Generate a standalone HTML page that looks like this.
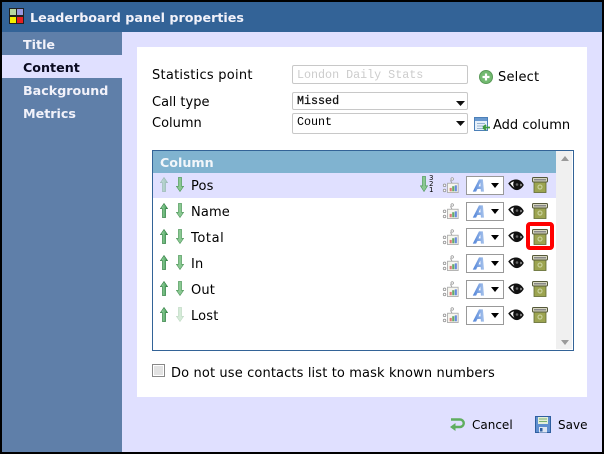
<!DOCTYPE html>
<html><head><meta charset="utf-8"><style>
html,body{margin:0;padding:0;background:#000}
#p{position:relative;width:604px;height:454px;background:#000;overflow:hidden;font-family:"DejaVu Sans","Liberation Sans",sans-serif;font-size:13px;color:#000}
#p div,#p svg,#p span.t{position:absolute}
.t{white-space:nowrap;line-height:16px}
.nav{left:23px;font-weight:bold;font-size:12.7px;color:#f2f2fa}
.box{left:292px;width:174px;background:#fff;border:1px solid #c8c8c8;border-radius:2px;font-family:"Liberation Mono",monospace;font-size:11.7px;color:#111}
.box span{position:absolute;left:4px;top:0;line-height:14px}
.r{left:191px;letter-spacing:.15px}
.sel{left:466px;width:36px;height:17px;border:1px solid #999;background:#fff}
</style></head><body><div id="p">
<svg width="0" height="0" style="left:0;top:0"><defs>
<linearGradient id="gu" x1="0" x2="1" y1="0" y2="0"><stop offset="0" stop-color="#a5dcae"/><stop offset="1" stop-color="#3f9a52"/></linearGradient>
<symbol id="up" viewBox="0 0 10 17" preserveAspectRatio="none"><path d="M5 .5L9.500 6.500H7v10H3v-10H.5z" fill="url(#gu)" stroke="#2f7a3f" stroke-width=".7"/></symbol>
<symbol id="dn" viewBox="0 0 10 17" preserveAspectRatio="none"><path d="M5 16.500L9.500 10.500H7V.5H3v10H.5z" fill="#8ac892" stroke="#4c9458" stroke-width=".7"/></symbol>
<symbol id="ch" viewBox="0 0 20 22"><path d="M12 3a1.500 1.500 0 1 0 .01 0M10 6l2 4" fill="#fff" stroke="#999"/><circle cx="3" cy="12" r="1.500" fill="#fff" stroke="#999"/><circle cx="3" cy="18" r="1.500" fill="#fff" stroke="#999"/><rect x="6.500" y="9.500" width="12.500" height="11" fill="#f6f6ee" stroke="#aaa"/><rect x="9" y="15" width="2.500" height="4" fill="#d77"/><rect x="12" y="13" width="2.500" height="6" fill="#6a6"/><rect x="15" y="12" width="2.500" height="7" fill="#68d"/></symbol>
<symbol id="eye" viewBox="0 0 16 12"><path d="M.2 4.500C3 1 6 .2 9 .5c3 .4 5.200 2.500 6.800 5.500-2 3.500-5 5.500-8 5C5 10.500 2.500 7.500.2 4.500z" fill="#111"/><path d="M2.200 4.500C3.500 3.200 4.800 2.600 6 2.500 4.800 4.500 5 6.800 6.500 8.800 4.800 7.800 3.500 6 2.200 4.500z" fill="#fff"/><path d="M12.500 4.500l1.500 1.500-1.500 1.500z" fill="#ddd"/><circle cx="9" cy="5.500" r="1.300" fill="#666"/></symbol>
<symbol id="tr" viewBox="0 0 16 16"><rect x="2" y="4" width="12" height="11.500" fill="#9ca450" stroke="#5f6a30" stroke-width=".8"/><rect x=".5" y=".5" width="15" height="4.500" rx="1" fill="#d8d8c0" stroke="#55583a"/><rect x="2" y="2" width="12" height="1.500" fill="#888"/><circle cx="8" cy="10" r="2" fill="none" stroke="#c8d09a" stroke-width="1.200"/></symbol>
<linearGradient id="ga" x1="0" x2="1" y1="0" y2="0"><stop offset="0" stop-color="#4f82d8"/><stop offset="1" stop-color="#a9c4ec"/></linearGradient>
<symbol id="A" viewBox="0 0 18 15" preserveAspectRatio="none"><path d="M1 14.500L9 .5h5l1.500 14h-4l-.3-3H7l-1.700 3zM8.500 8.500h2.500L10.700 4z" fill="url(#ga)" fill-rule="evenodd"/></symbol>
</defs></svg>

<div style="left:2px;top:2px;width:600px;height:450px;background:#e0e0ff"></div>
<div style="left:2px;top:2px;width:600px;height:30px;background:#336397"></div>
<svg style="left:9px;top:8px" width="15" height="16" viewBox="0 0 15 16"><rect width="15" height="16" fill="#222"/><rect x="1" y="1" width="6" height="6" fill="#b8d8a0"/><rect x="8" y="1" width="6" height="6" fill="#9a9ae0"/><rect x="1" y="9" width="6" height="6" fill="#f4f000"/><rect x="8" y="9" width="6" height="6" fill="#e82020"/></svg>
<span class="t" style="left:30px;font-weight:bold;font-size:12.7px;color:#f2f2fa;top:10px">Leaderboard panel properties</span>

<div style="left:2px;top:32px;width:120px;height:420px;background:#5f7fa9"></div>
<div style="left:2px;top:55px;width:120px;height:23px;background:#e0e0ff"></div>
<span class="t nav" style="top:37px">Title</span>
<span class="t nav" style="top:60px;color:#0a0a20">Content</span>
<span class="t nav" style="top:83px">Background</span>
<span class="t nav" style="top:106px">Metrics</span>

<div style="left:137px;top:47px;width:450px;height:350px;background:#fff"></div>
<span class="t" style="left:152px;top:68px;letter-spacing:.25px">Statistics point</span>
<span class="t" style="left:152px;top:95px">Call type</span>
<span class="t" style="left:152px;top:116px">Column</span>

<div class="box" style="top:65px;height:17px;color:#ccc"><span style="top:2px">London Daily Stats</span></div>
<div class="box" style="top:92px;height:16px"><span style="top:1px;-webkit-text-stroke:.25px #111">Missed</span></div>
<svg style="left:456px;top:101px" width="9" height="5"><path d="M0 0h9L4.500 5z" fill="#111"/></svg>
<div class="box" style="top:113px;height:19px"><span style="top:1px;color:#000">Count</span></div>
<svg style="left:456px;top:121px" width="9" height="5"><path d="M0 0h9L4.500 5z" fill="#111"/></svg>

<svg style="left:479px;top:70px" width="14" height="14"><circle cx="7" cy="7" r="6.500" fill="#72ba70" stroke="#5a9a58"/><path d="M7 3.500v7M3.500 7h7" stroke="#fff" stroke-width="2.200"/></svg>
<span class="t" style="left:498px;top:70px;letter-spacing:.2px">Select</span>
<svg style="left:474px;top:117px" width="16" height="15" viewBox="0 0 16 15"><rect x=".5" y=".5" width="13" height="13" fill="#e6f0fa" stroke="#4c80b8"/><rect x="1" y="1" width="12" height="3" fill="#6a9ad0"/><path d="M3 6.500h8M3 9h8M3 11.500h8" stroke="#9ab4d0"/><path d="M16 10.500H9M9 10.500l3-2.500M9 10.500l3 2.500" stroke="#3d9a40" stroke-width="1.800" fill="none"/></svg>
<span class="t" style="left:493px;top:118px">Add column</span>

<div style="left:152px;top:150px;width:420px;height:199px;border:1px solid #336397;background:#fff"></div>
<div style="left:153px;top:151px;width:403px;height:22px;background:#80b3d0"></div>
<span class="t" style="left:160px;top:155px;font-weight:bold;font-size:12.7px;color:#f2f6fa">Column</span>
<div style="left:153px;top:173px;width:403px;height:25px;background:#e0e0ff"></div>
<div style="left:556px;top:151px;width:16px;height:198px;background:#f0f0f0"></div>
<svg style="left:561px;top:156px" width="8" height="5"><path d="M4 0l4 5H0z" fill="#9a9a9a"/></svg>
<svg style="left:561px;top:340px" width="8" height="5"><path d="M0 0h8L4 5z" fill="#9a9a9a"/></svg>

<svg style="left:160px;top:177px;opacity:.4" width="8" height="15"><use href="#up"/></svg>
<svg style="left:176px;top:177px" width="8" height="15"><use href="#dn"/></svg>
<span class="t r" style="top:179px">Pos</span>
<svg style="left:420px;top:176px" width="8" height="16"><use href="#dn"/></svg>
<span class="t" style="left:429px;top:175px;font-size:7px;line-height:6px;white-space:pre-line">3
2
1</span>

<svg style="left:160px;top:203px" width="8" height="15"><use href="#up"/></svg>
<svg style="left:176px;top:203px" width="8" height="15"><use href="#dn"/></svg>
<span class="t r" style="top:205px">Name</span>
<svg style="left:160px;top:229px" width="8" height="15"><use href="#up"/></svg>
<svg style="left:176px;top:229px" width="8" height="15"><use href="#dn"/></svg>
<span class="t r" style="top:231px;letter-spacing:.6px">Total</span>
<svg style="left:160px;top:255px" width="8" height="15"><use href="#up"/></svg>
<svg style="left:176px;top:255px" width="8" height="15"><use href="#dn"/></svg>
<span class="t r" style="top:257px">In</span>
<svg style="left:160px;top:281px" width="8" height="15"><use href="#up"/></svg>
<svg style="left:176px;top:281px" width="8" height="15"><use href="#dn"/></svg>
<span class="t r" style="top:283px">Out</span>
<svg style="left:160px;top:307px" width="8" height="15"><use href="#up"/></svg>
<svg style="left:176px;top:307px;opacity:.35" width="8" height="15"><use href="#dn"/></svg>
<span class="t r" style="top:309px">Lost</span>

<svg style="left:442px;top:175px" width="17" height="19"><use href="#ch"/></svg>
<svg style="left:442px;top:201px" width="17" height="19"><use href="#ch"/></svg>
<svg style="left:442px;top:227px" width="17" height="19"><use href="#ch"/></svg>
<svg style="left:442px;top:253px" width="17" height="19"><use href="#ch"/></svg>
<svg style="left:442px;top:279px" width="17" height="19"><use href="#ch"/></svg>
<svg style="left:442px;top:305px" width="17" height="19"><use href="#ch"/></svg>

<div class="sel" style="top:176px"></div><div class="sel" style="top:202px"></div><div class="sel" style="top:228px"></div><div class="sel" style="top:254px"></div><div class="sel" style="top:280px"></div><div class="sel" style="top:306px"></div>
<svg style="left:472px;top:179px" width="14" height="13"><use href="#A"/></svg>
<svg style="left:472px;top:205px" width="14" height="13"><use href="#A"/></svg>
<svg style="left:472px;top:231px" width="14" height="13"><use href="#A"/></svg>
<svg style="left:472px;top:257px" width="14" height="13"><use href="#A"/></svg>
<svg style="left:472px;top:283px" width="14" height="13"><use href="#A"/></svg>
<svg style="left:472px;top:309px" width="14" height="13"><use href="#A"/></svg>
<svg style="left:491px;top:183px" width="8" height="5"><path d="M0 0h8L4 5z" fill="#000"/></svg>
<svg style="left:491px;top:209px" width="8" height="5"><path d="M0 0h8L4 5z" fill="#000"/></svg>
<svg style="left:491px;top:235px" width="8" height="5"><path d="M0 0h8L4 5z" fill="#000"/></svg>
<svg style="left:491px;top:261px" width="8" height="5"><path d="M0 0h8L4 5z" fill="#000"/></svg>
<svg style="left:491px;top:287px" width="8" height="5"><path d="M0 0h8L4 5z" fill="#000"/></svg>
<svg style="left:491px;top:313px" width="8" height="5"><path d="M0 0h8L4 5z" fill="#000"/></svg>

<svg style="left:508px;top:179px" width="16" height="12"><use href="#eye"/></svg>
<svg style="left:508px;top:205px" width="16" height="12"><use href="#eye"/></svg>
<svg style="left:508px;top:231px" width="16" height="12"><use href="#eye"/></svg>
<svg style="left:508px;top:257px" width="16" height="12"><use href="#eye"/></svg>
<svg style="left:508px;top:283px" width="16" height="12"><use href="#eye"/></svg>
<svg style="left:508px;top:309px" width="16" height="12"><use href="#eye"/></svg>

<svg style="left:532px;top:177px" width="16" height="16"><use href="#tr"/></svg>
<svg style="left:532px;top:203px" width="16" height="16"><use href="#tr"/></svg>
<svg style="left:532px;top:229px" width="16" height="16"><use href="#tr"/></svg>
<svg style="left:532px;top:255px" width="16" height="16"><use href="#tr"/></svg>
<svg style="left:532px;top:281px" width="16" height="16"><use href="#tr"/></svg>
<svg style="left:532px;top:307px" width="16" height="16"><use href="#tr"/></svg>
<div style="left:526px;top:222px;width:20px;height:20px;border:4px solid #f00;border-radius:4px"></div>

<div style="left:152px;top:364px;width:11px;height:11px;border:1px solid #888;background:#e2e2e2;box-shadow:inset 0 0 0 1px #fff"></div>
<span class="t" style="left:171px;top:366px;letter-spacing:.13px">Do not use contacts list to mask known numbers</span>

<svg style="left:449px;top:417px" width="16" height="15" viewBox="0 0 16 15"><path d="M2 2.500h9a3.500 3.500 0 0 1 0 7.500H4" fill="none" stroke="#5fae5f" stroke-width="2.400"/><path d="M6.500 6v8L1 10z" fill="#5fae5f"/></svg>
<span class="t" style="left:472px;top:417px;font-size:12px">Cancel</span>
<svg style="left:535px;top:416px" width="16" height="17" viewBox="0 0 16 17"><rect x=".5" y=".5" width="15" height="16" fill="#5f8fd0" stroke="#2f5f9f"/><rect x="3" y="1" width="10" height="7" fill="#e4efd8"/><path d="M4 3h8M4 5.500h8" stroke="#7ab070"/><rect x="4" y="11" width="8" height="5.500" fill="#dfe6f2"/><rect x="5" y="12" width="2.500" height="3.500" fill="#2f5f9f"/></svg>
<span class="t" style="left:558px;top:417px;font-size:12px">Save</span>
</div></body></html>
